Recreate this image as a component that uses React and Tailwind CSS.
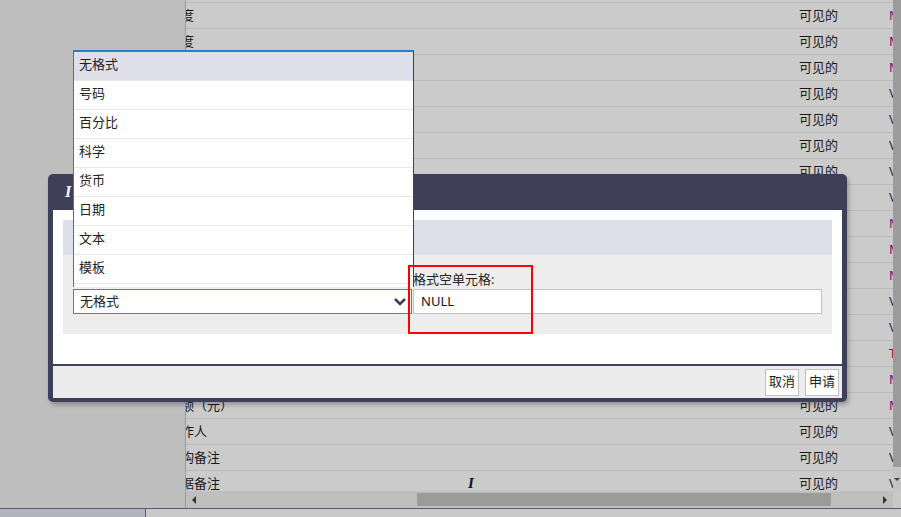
import React from 'react';

const rows = [
  { name: '精度', vis: '可见的', t: 'M' },
  { name: '长度', vis: '可见的', t: 'M' },
  { name: '', vis: '可见的', t: 'M' },
  { name: '', vis: '可见的', t: 'V' },
  { name: '', vis: '可见的', t: 'V' },
  { name: '', vis: '可见的', t: 'V' },
  { name: '', vis: '可见的', t: 'V' },
  { name: '', vis: '', t: 'V' },
  { name: '', vis: '', t: 'M' },
  { name: '', vis: '', t: 'M' },
  { name: '', vis: '', t: 'M' },
  { name: '', vis: '', t: 'V' },
  { name: '', vis: '', t: 'V' },
  { name: '', vis: '', t: 'T' },
  { name: '', vis: '', t: 'M' },
  { name: '金额（元）', vis: '可见的', t: 'M' },
  { name: '制作人', vis: '可见的', t: 'V' },
  { name: '结构备注', vis: '可见的', t: 'V' },
  { name: '数据备注', vis: '可见的', t: 'V', cursor: true },
];

const typeColor = {
  M: 'text-[#7a0a7a]',
  V: 'text-[#1d2b4a]',
  T: 'text-[#8a1c1c]',
};

const formats = ['无格式', '号码', '百分比', '科学', '货币', '日期', '文本', '模板'];

const DataRow = ({ row }) => (
  <div className="relative grid h-[26px] shrink-0 grid-cols-[613px_90px_1fr] items-center border-t border-[#bababa]">
    <div className="overflow-hidden whitespace-nowrap">
      <span className="ml-[-18px] block">{row.name}</span>
    </div>
    <div className="whitespace-nowrap">{row.vis}</div>
    <div className={`whitespace-nowrap ${typeColor[row.t]}`}>{row.t}</div>
    {row.cursor && (
      <span className="absolute left-[282px] top-[5px] font-['Liberation_Serif',serif] text-[15px] font-bold italic leading-none text-[#111]">
        I
      </span>
    )}
  </div>
);

const FormatDropdown = () => (
  <div className="absolute left-[73px] top-[50px] w-[341px] border-t-2 border-l border-r border-t-[#2c7cc4] border-l-[#2f78b8] border-r-[#3f3f5a] bg-white pb-[3px] text-[#222]">
    {formats.map((f, i) => (
      <div
        key={f}
        className={`flex h-[29px] items-center border-b border-[#e6e6e6] pb-[2px] pl-[5px] ${i === 0 ? 'bg-[#dfdfea]' : 'bg-white'}`}
      >
        {f}
      </div>
    ))}
  </div>
);

const FormatDialog = () => (
  <div className="absolute left-[48px] top-[174px] flex h-[228px] w-[799px] flex-col rounded-[5px] bg-[#3f3f5a] px-[5px] pb-[4px] shadow-[2px_3px_4px_rgba(0,0,0,0.25)]">
    <div className="flex h-[36px] shrink-0 items-center pl-[12px]">
      <span className="font-['Liberation_Serif',serif] text-[16px] font-bold italic text-white">I</span>
    </div>
    <div className="flex h-[154px] shrink-0 flex-col bg-white px-[10px] pb-[30px] pt-[10px]">
      <div className="h-[35px] shrink-0 bg-[#dfdfea]" />
      <div className="flex flex-1 gap-px bg-[#ededed] px-[10px] pt-[15px]">
        <div className="flex w-[339px] flex-col">
          <div className="h-[19px]" />
          <div className="flex h-[25px] items-center justify-between border border-[#3b86c6] bg-white pl-[6px] pr-[4px] text-[#222]">
            <span>无格式</span>
            <svg width="14" height="10" viewBox="0 0 14 10">
              <polyline points="2,2 7,7 12,2" fill="none" stroke="#3f3f5a" strokeWidth="2.6" />
            </svg>
          </div>
        </div>
        <div className="flex flex-1 flex-col">
          <label className="h-[19px] leading-[19px] text-[#222]">格式空单元格:</label>
          <div className="flex h-[25px] items-center border border-[#c2c2c2] bg-white pl-[7px] text-[#111]">
            NULL
          </div>
        </div>
      </div>
    </div>
    <div className="h-[2px] shrink-0" />
    <div className="flex flex-1 items-center justify-end gap-[6px] bg-[#ececec] pr-[3px]">
      <button className="h-[27px] w-[34px] border border-[#c0c0c0] bg-white text-[#222]">取消</button>
      <button className="h-[27px] w-[34px] border border-[#c0c0c0] bg-white text-[#222]">申请</button>
    </div>
  </div>
);

export default function App() {
  return (
    <div className="relative h-[517px] w-[901px] overflow-hidden bg-[#bebebe] font-['Noto_Sans','Noto_Sans_CJK_SC',sans-serif] text-[13px] leading-normal text-[#1a1a1a]">
      <div className="flex h-[508px]">
        <div className="w-[186px] shrink-0 border-r border-[#9a9a9a] bg-[#bebebe]" />
        <div className="flex min-w-0 flex-1 flex-col">
          <div className="flex min-h-0 flex-1">
            <div className="flex min-w-0 flex-1 flex-col overflow-hidden bg-[#cbcbcb] pt-[2px]">
              {rows.map((r, i) => (
                <DataRow key={i} row={r} />
              ))}
            </div>
            <div className="flex w-[8px] shrink-0 flex-col bg-[#c4c4c4]">
              <div className="h-[467px] bg-[#9c9c9c]" />
              <div className="flex flex-1 items-center justify-end pr-[1px]">
                <span className="h-0 w-0 border-x-[3px] border-t-[3px] border-x-transparent border-t-[#444]" />
              </div>
            </div>
          </div>
          <div className="flex h-[17px] shrink-0">
            <div className="flex flex-1 items-center bg-[#bfbfbf]">
              <div className="flex w-[231px] items-center pl-[6px]">
                <span className="h-0 w-0 border-y-[4px] border-r-[4px] border-y-transparent border-r-[#333]" />
              </div>
              <div className="h-[13px] w-[414px] bg-[#9b9b9b]" />
              <div className="flex flex-1 items-center justify-end pr-[6px]">
                <span className="h-0 w-0 border-y-[4px] border-l-[4px] border-y-transparent border-l-[#333]" />
              </div>
            </div>
            <div className="w-[8px] bg-[#c8c8c8]" />
          </div>
        </div>
      </div>
      <div className="flex h-[9px] border-t border-[#5a5a74]">
        <div className="w-[146px] border-r border-[#5a5a74] bg-[#b3b3bd]" />
        <div className="flex-1 bg-[#c9c9c9]" />
      </div>

      <FormatDialog />
      <FormatDropdown />
      <div className="absolute left-[408px] top-[265px] h-[69px] w-[125px] border-2 border-[#ff0000]" />
    </div>
  );
}
